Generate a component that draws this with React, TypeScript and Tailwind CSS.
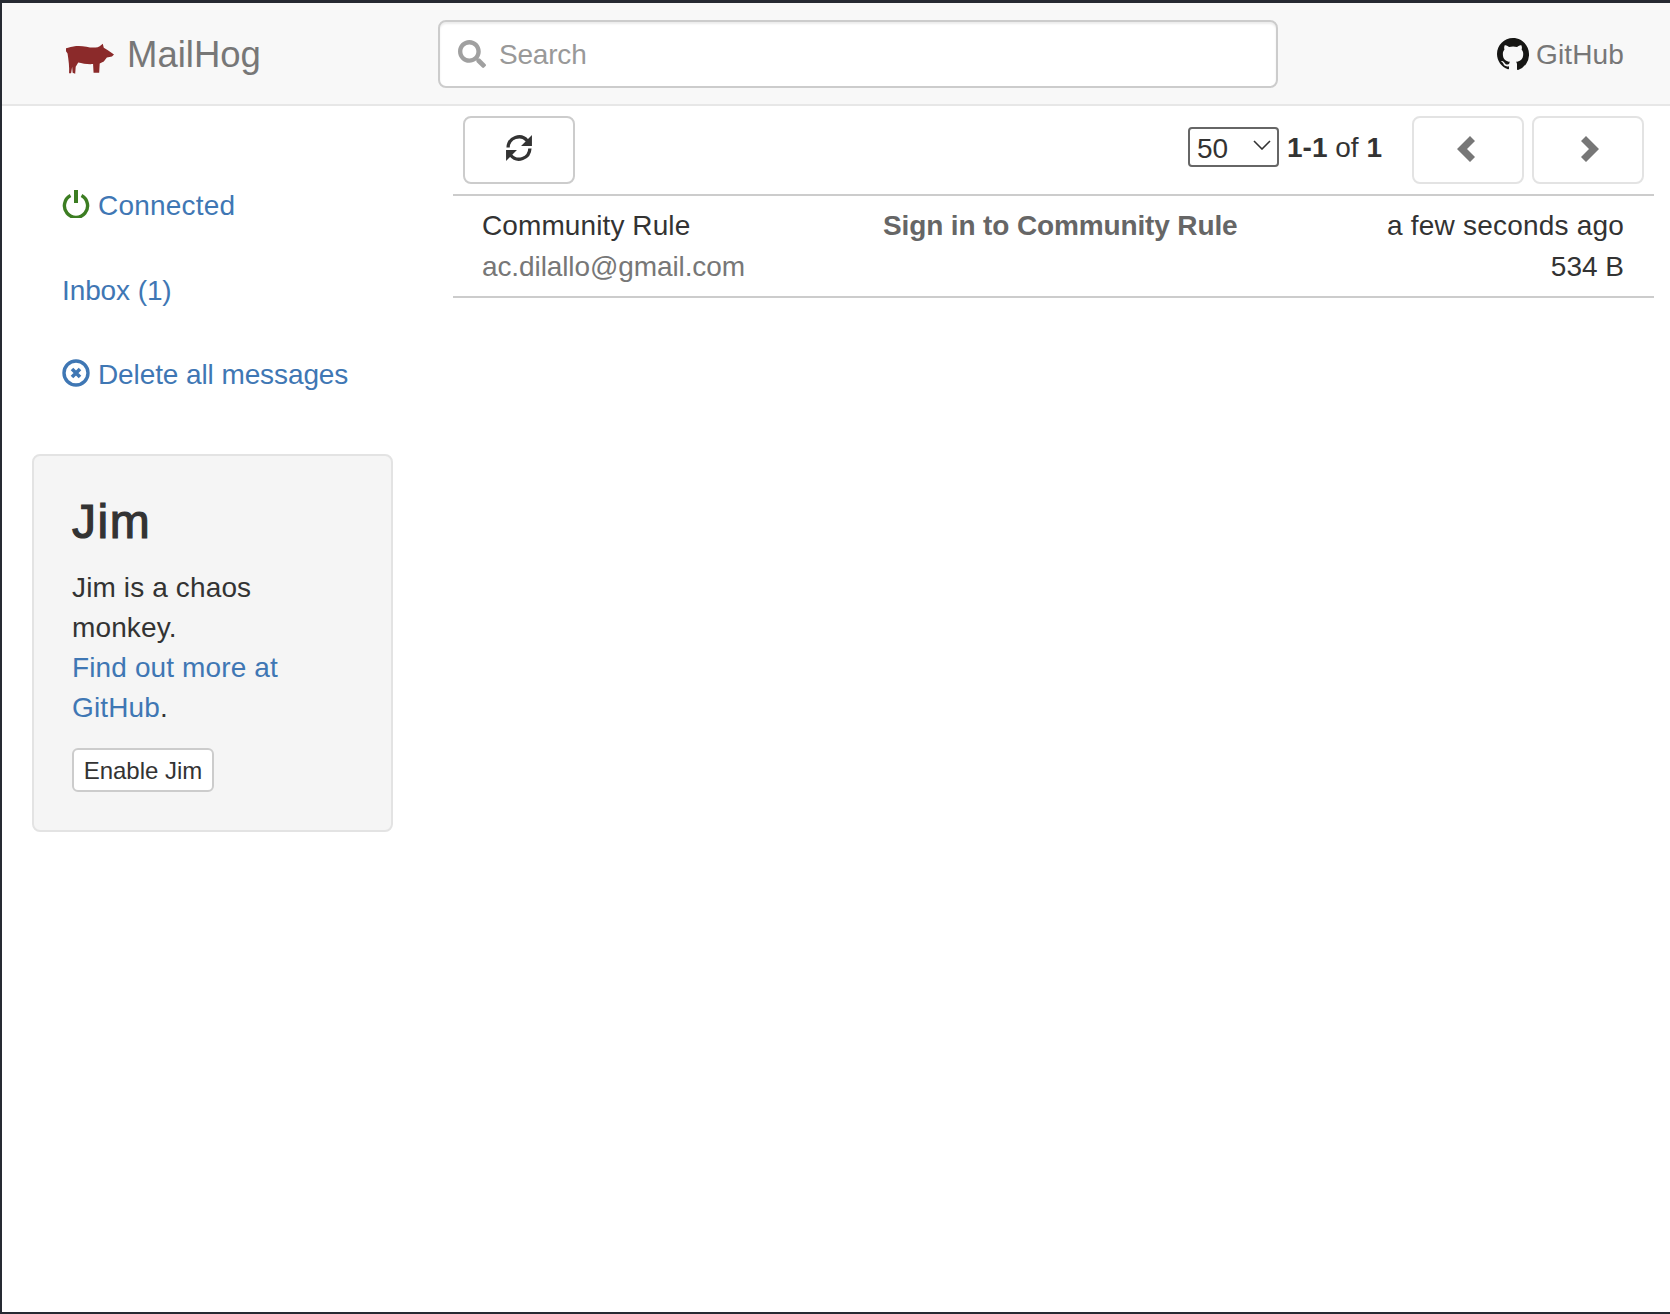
import React from "react";
import { FaSearch } from "react-icons/fa";

const Pig = () => (
  <svg width="48" height="31" viewBox="0 0 47 30" className="shrink-0 mt-[10px]">
    <path fill="#8b2a2a" d="M0 5 L2 4.5 C8 2.5 14 2.5 20 3.5 C24 4.5 28 4.5 31 4 L33 3 L36 0.5 L37 4.5 L41 7 L47 11 L45 13 L40 14 L37 18 L33 20 L32.5 29 L27 29 L26.5 20.5 C22 21 16 20 12 19 L9.5 23 L9 30 L6.5 29 L6 23 L5 29.5 L3 29.5 C3.5 24 2.5 16 1.5 10 L0 8 Z" />
  </svg>
);

const Github = () => (
  <svg width="32" height="32" viewBox="0 0 16 16" className="shrink-0">
    <path fill="#161614" d="M8 0C3.58 0 0 3.58 0 8c0 3.54 2.29 6.53 5.47 7.59.4.07.55-.27.55-.38 0-.14-.01-.61-.01-1.11-2.01.37-2.53-.49-2.69-.94-.09-.23-.48-.94-.82-1.13-.28-.15-.68-.52-.01-.53.63-.01 1.08.58 1.23.82.72 1.21 1.87.87 2.33.66.07-.52.28-.87.51-1.07-1.78-.2-3.64-.89-3.64-3.95 0-.87.31-1.59.82-2.15-.08-.2-.36-1.02.08-2.12 0 0 .67-.21 2.2.82.64-.18 1.32-.27 2-.27.68 0 1.36.09 2 .27 1.53-1.04 2.2-.82 2.2-.82.44 1.1.16 1.92.08 2.12.51.56.82 1.27.82 2.15 0 3.07-1.87 3.75-3.65 3.95.29.25.54.73.54 1.48 0 1.07-.01 1.93-.01 2.2 0 .21.15.46.55.38A8.013 8.013 0 0016 8c0-4.42-3.58-8-8-8z" />
  </svg>
);

const Power = () => (
  <svg width="28" height="28" viewBox="0 0 28 28" className="shrink-0 mb-[4px]">
    <path d="M8.5 5.6 A11.6 11.6 0 1 0 19.5 5.6" fill="none" stroke="#3c7d22" strokeWidth="3.4" />
    <rect x="12" y="0" width="4" height="13" fill="#3c7d22" />
  </svg>
);

const RemoveCircle = () => (
  <svg width="28" height="28" viewBox="0 0 28 28" className="shrink-0 mb-[4px]">
    <circle cx="14" cy="14" r="12" fill="none" stroke="#3f77b4" strokeWidth="3.4" />
    <path d="M10 10 L18 18 M18 10 L10 18" stroke="#3f77b4" strokeWidth="3.6" />
  </svg>
);

const Refresh = () => (
  <svg width="28" height="28" viewBox="0 0 27 27" className="mb-[4px] mr-[1px]">
    <path d="M3 13 A10.5 10.5 0 0 1 21.5 6.5" fill="none" stroke="#333" strokeWidth="3.2" />
    <path d="M26 1 L26 11.5 L15.5 11.5 Z" fill="#333" />
    <path d="M24 14 A10.5 10.5 0 0 1 5.5 20.5" fill="none" stroke="#333" strokeWidth="3.2" />
    <path d="M1 26 L1 15.5 L11.5 15.5 Z" fill="#333" />
  </svg>
);

const ChevronLeft = () => (
  <svg width="18" height="26" viewBox="0 0 18 26" className="mr-[4px] mb-[2px]">
    <path d="M13 0 L18 5 L10 13 L18 21 L13 26 L0 13 Z" fill="#777" />
  </svg>
);

const ChevronRight = () => (
  <svg width="18" height="26" viewBox="0 0 18 26" className="ml-[4px] mb-[2px]">
    <path d="M5 0 L0 5 L8 13 L0 21 L5 26 L18 13 Z" fill="#777" />
  </svg>
);

export default function App() {
  return (
    <div className="w-[1670px] h-[1314px] flex flex-col overflow-hidden bg-white border-l-2 border-t-[3px] border-b-2 border-[#262a32] font-['Liberation_Sans',Arial,sans-serif] text-[#333] text-[28px] leading-[40px]">
      <header className="h-[103px] shrink-0 flex items-center bg-[#f8f8f8] border-b-2 border-[#e7e7e7]">
        <div className="w-[436px] shrink-0 pl-[64px] flex items-center gap-[13px]">
          <Pig />
          <span className="text-[36.5px] text-[#777] mt-[2px]">MailHog</span>
        </div>
        <div className="w-[840px] h-[68px] shrink-0 flex items-center gap-[13px] pl-[18px] bg-white border-2 border-[#ccc] rounded-[8px] shadow-[inset_0_2px_2px_rgba(0,0,0,0.075)]">
          <FaSearch className="w-[28px] h-[28px] text-[#a0a0a0]" />
          <span className="text-[#999] mt-[3px] tracking-[-0.2px]">Search</span>
        </div>
        <div className="flex-1 flex items-center justify-end pr-[46px] gap-[7px]">
          <Github />
          <span className="text-[#777] mt-[2px] tracking-[0.15px]">GitHub</span>
        </div>
      </header>

      <div className="flex flex-1 min-h-0">
        <aside className="w-[451px] shrink-0 pl-[30px]">
          <nav className="pl-[30px] pt-[80px] flex flex-col gap-[44.5px] text-[#3f77b4] w-[361px]">
            <a className="flex items-center gap-[8px] tracking-[0.2px]"><Power />Connected</a>
            <a className="-tracking-[0.1px]">Inbox (1)</a>
            <a className="flex items-center gap-[8px] -tracking-[0.1px]"><RemoveCircle />Delete all messages</a>
          </nav>
          <div className="mt-[59px] w-[361px] h-[378px] bg-[#f5f5f5] border-2 border-[#e3e3e3] rounded-[8px] pl-[38px] pt-[36px]">
            <h3 className="text-[48px] leading-[60px] font-normal tracking-[1.5px] [-webkit-text-stroke:1.2px_#333] text-[#333] mb-[16px]">Jim</h3>
            <p className="w-[240px] tracking-[0.13px]">
              Jim is a chaos monkey.
              <br />
              <a className="text-[#3f77b4]">Find out more at GitHub</a>.
            </p>
            <button className="mt-[20px] h-[44px] w-[142px] pt-[1px] bg-white border-2 border-[#ccc] rounded-[6px] text-[24px] text-[#333]">Enable Jim</button>
          </div>
        </aside>

        <main className="flex-1 pr-[16px] min-w-0">
          <div className="h-[90px] flex items-start pt-[10px] border-b-2 border-[#ccc]">
            <button className="ml-[10px] w-[112px] h-[68px] flex items-center justify-center border-2 border-[#ccc] rounded-[8px]">
              <Refresh />
            </button>
            <div className="ml-auto mr-[10px] flex items-start">
              <div className="relative mt-[11px] w-[91px] h-[40px] mr-[8px]">
                <select className="w-full h-full appearance-none bg-transparent border-2 border-[#666] rounded-[4px] pl-[7px] text-[#333]">
                  <option>50</option>
                </select>
                <svg width="18" height="10" viewBox="0 0 18 10" className="absolute right-[8px] top-[13px] pointer-events-none">
                  <path d="M1 1 L9 9 L17 1" fill="none" stroke="#333" strokeWidth="1.6" />
                </svg>
              </div>
              <span className="mt-[12px] mr-[30px]"><b>1-1</b> of <b>1</b></span>
              <button className="w-[112px] h-[68px] mr-[8px] flex items-center justify-center border-2 border-[#e3e3e3] rounded-[8px]">
                <ChevronLeft />
              </button>
              <button className="w-[112px] h-[68px] flex items-center justify-center border-2 border-[#e3e3e3] rounded-[8px]">
                <ChevronRight />
              </button>
            </div>
          </div>
          <div className="h-[102px] flex pl-[29px] pr-[30px] pt-[10px] border-b-2 border-[#ccc]">
            <div className="w-[401px]">
              <div className="tracking-[0.1px]">Community Rule</div>
              <div className="text-[#777] mt-[1px] -tracking-[0.1px]">ac.dilallo@gmail.com</div>
            </div>
            <div className="flex-1 font-bold text-[#666] -tracking-[0.13px]">Sign in to Community Rule</div>
            <div className="text-right">
              <div className="tracking-[0.2px]">a few seconds ago</div>
              <div className="mt-[1px]">534 B</div>
            </div>
          </div>
        </main>
      </div>
    </div>
  );
}
